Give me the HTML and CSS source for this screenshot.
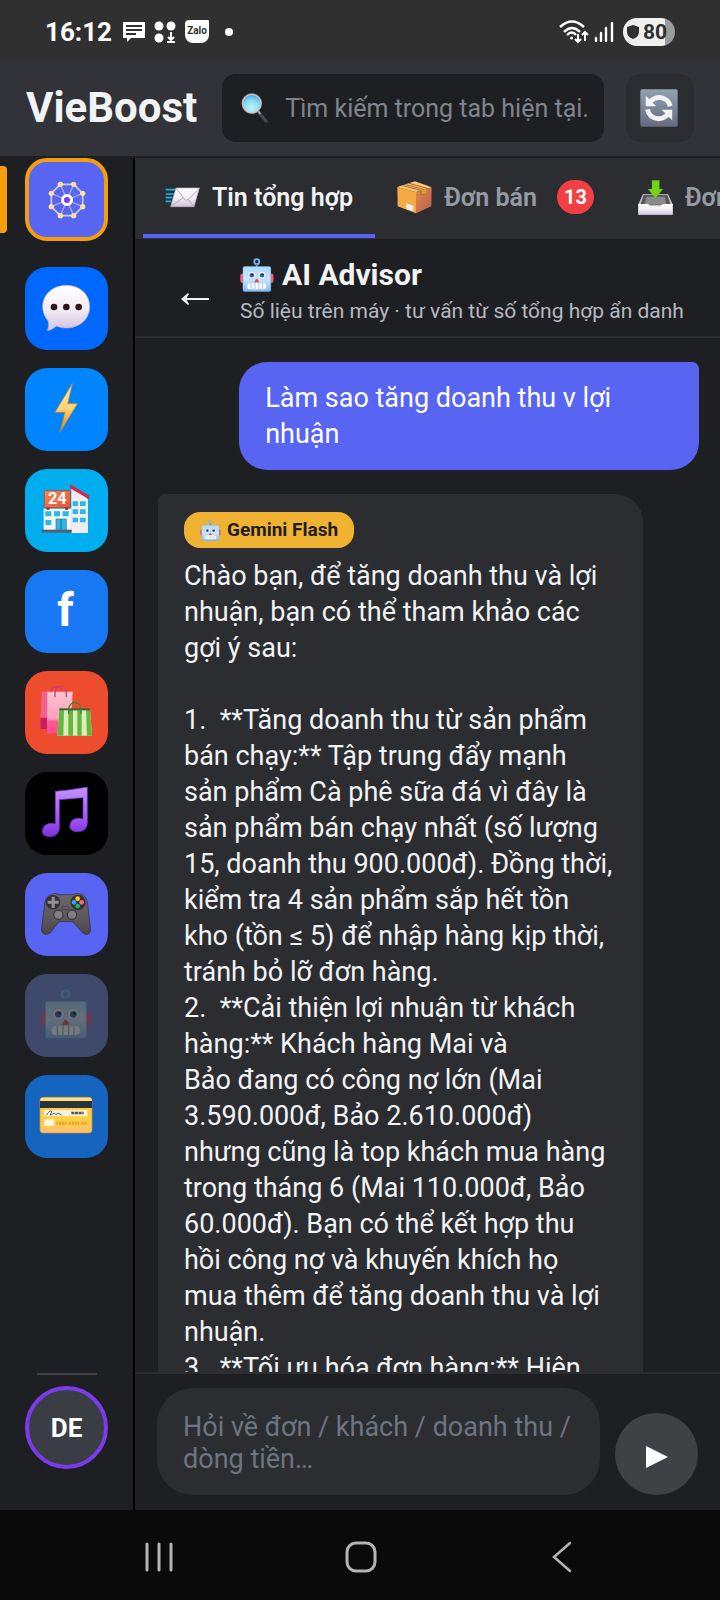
FILE: index.html
```html
<!DOCTYPE html>
<html lang="vi">
<head>
  <meta charset="UTF-8">
  <meta name="viewport" content="width=device-width, initial-scale=1.0">
  <title>VieBoost</title>
  <link rel="stylesheet" href="styles.css">
</head>
<body>
  <svg class="sprite" aria-hidden="true">
    <defs>
      <linearGradient id="g-robot" x1="0" y1="0" x2="0" y2="1"><stop offset="0" stop-color="#a9dcff"/><stop offset=".5" stop-color="#c9e6ff"/><stop offset="1" stop-color="#7fbcf5"/></linearGradient>
      <linearGradient id="g-white" x1="0" y1="0" x2="0" y2="1"><stop offset="0" stop-color="#ffffff"/><stop offset=".55" stop-color="#f0ecf2"/><stop offset="1" stop-color="#d3c0e2"/></linearGradient>
      <linearGradient id="g-bolt" x1="0" y1="0" x2="0" y2="1"><stop offset="0" stop-color="#ffe9a0"/><stop offset=".5" stop-color="#ffd673"/><stop offset="1" stop-color="#e07e18"/></linearGradient>
      <linearGradient id="g-sign" x1="0" y1="0" x2="1" y2="1"><stop offset="0" stop-color="#f08a50"/><stop offset="1" stop-color="#ea5238"/></linearGradient>
      <linearGradient id="g-pink" x1="0" y1="0" x2="0" y2="1"><stop offset="0" stop-color="#ffc4d2"/><stop offset=".65" stop-color="#ff9fb9"/><stop offset=".7" stop-color="#ff5c94"/><stop offset="1" stop-color="#ff4a8c"/></linearGradient>
      <linearGradient id="g-note" x1="0" y1="0" x2="0" y2="1"><stop offset="0" stop-color="#c592ff"/><stop offset=".6" stop-color="#a55bf5"/><stop offset="1" stop-color="#7a2fe0"/></linearGradient>
      <linearGradient id="g-pad" x1="0" y1="0" x2="0" y2="1"><stop offset="0" stop-color="#6c686c"/><stop offset=".6" stop-color="#5c585c"/><stop offset="1" stop-color="#484448"/></linearGradient>
      <linearGradient id="g-card" x1="0" y1="0" x2="0" y2="1"><stop offset="0" stop-color="#ffcc3a"/><stop offset=".6" stop-color="#ffd040"/><stop offset="1" stop-color="#ffbf70"/></linearGradient>
      <linearGradient id="g-sync" x1="0" y1="0" x2="0" y2="1"><stop offset="0" stop-color="#8fa3b2"/><stop offset="1" stop-color="#686a80"/></linearGradient>
      <linearGradient id="g-box" x1="0" y1="0" x2="1" y2="1"><stop offset="0" stop-color="#dd8c4a"/><stop offset="1" stop-color="#bd5c50"/></linearGradient>
      <radialGradient id="g-lens" cx=".5" cy=".75" r=".7"><stop offset="0" stop-color="#c5f3fb"/><stop offset=".6" stop-color="#8adcf8"/><stop offset="1" stop-color="#3fb0ea"/></radialGradient>
    </defs>
    <symbol id="robot" viewBox="0 0 150 150">
      <circle cx="74" cy="16" r="11" fill="none" stroke="#78b5ee" stroke-width="8"/>
      <path d="M74 27v12" stroke="#5c94d0" stroke-width="9"/>
      <rect x="1" y="68" width="20" height="42" rx="10" fill="#f25a78"/>
      <rect x="128" y="68" width="20" height="42" rx="10" fill="#f25a78"/>
      <rect x="13" y="37" width="123" height="111" rx="8" fill="url(#g-robot)" stroke="#68aef0" stroke-width="2"/>
      <circle cx="52" cy="76" r="18" fill="#f5f3f8" stroke="#9eb6d4" stroke-width="2"/>
      <circle cx="97" cy="76" r="18" fill="#f5f3f8" stroke="#9eb6d4" stroke-width="2"/>
      <circle cx="52" cy="76" r="10" fill="#2b66b4"/><circle cx="97" cy="76" r="10" fill="#2b66b4"/>
      <circle cx="55" cy="73" r="4" fill="#112544"/><circle cx="100" cy="73" r="4" fill="#112544"/>
      <path d="M74 89l12 18H62z" fill="#f0445c"/>
      <rect x="32" y="111" width="84" height="27" rx="12" fill="#fff"/>
      <path d="M49 111v27M66 111v27M83 111v27M99 111v27" stroke="#9db8d8" stroke-width="4"/>
    </symbol>
  </svg>

  <div class="statusbar">
    <span class="time">16:12</span>
    <svg class="st-msg" viewBox="0 0 24 22"><path d="M1 1h22v16H9l-4 4v-4H1z" fill="#fff"/><path d="M4 5h16M4 9h16M4 13h10" stroke="#303030" stroke-width="2"/></svg>
    <svg class="st-dots" viewBox="0 0 22 22"><g fill="#fff"><circle cx="5" cy="5" r="4.500"/><circle cx="17" cy="5" r="4.500"/><circle cx="5" cy="17" r="4.500"/></g><path d="M17 11v8m-3-3l3 3 3-3M13 21h8" fill="none" stroke="#fff" stroke-width="2"/></svg>
    <span class="st-zalo">Zalo</span>
    <span class="st-dot"></span>
    <span class="spacer"></span>
    <svg class="st-wifi" viewBox="0 0 30 24"><g fill="none" stroke="#fff" stroke-width="2.400"><path d="M1 7q12-11 24 0M5 12q8-8 16 0M8 15q5-5 9 0"/><path stroke-width="2" d="M19 14v8m-3-3l3 3 3-3M26 21v-9m-3 3l3-3 3 3"/></g><circle cx="12.500" cy="18" r="1.500" fill="#fff"/></svg>
    <svg class="st-signal" viewBox="0 0 20 20"><path d="M2 16v3M7 11v8M12 6v13M18 1v18" stroke="#fff" stroke-width="2.400" stroke-linecap="round"/></svg>
    <span class="battery"><svg viewBox="0 0 14 16"><path d="M7 1l6 2v5q0 5-6 7Q1 13 1 8V3z" fill="#303030"/></svg>80</span>
  </div>

  <header class="topbar">
    <h1>VieBoost</h1>
    <label class="search">
      <svg viewBox="0 0 80 88"><path d="M53 58l22 25" stroke="#4d4558" stroke-width="9" stroke-linecap="round"/><path d="M50 52l8 9" stroke="#b9b6bd" stroke-width="5"/><circle cx="32" cy="31" r="28" fill="url(#g-lens)" stroke="#9a939c" stroke-width="5"/><circle cx="32" cy="31" r="27" fill="none" stroke="#f0eef2" stroke-width="2"/></svg>
      <input type="text" placeholder="Tìm kiếm trong tab hiện tại." aria-label="Tìm kiếm">
    </label>
    <button class="refresh" aria-label="Làm mới">
      <svg viewBox="0 0 112 112"><rect x="1" y="1" width="110" height="110" rx="5" fill="url(#g-sync)"/><path d="M2 53h108" stroke="#77889a" stroke-width="3"/><g fill="none" stroke="#f3f3f5" stroke-width="14"><path d="M29 37Q56 14 80 34q7 7 9 17"/><path d="M83 75Q56 98 32 79q-8-8-10-19"/></g><path d="M17 20v31h31zM95 92V61H64z" fill="#f3f3f5"/></svg>
    </button>
  </header>

  <div class="app">
    <nav class="rail">
      <a href="#" class="item active" aria-label="Tổng hợp">
        <svg class="wheel" viewBox="0 0 120 120"><path d="M60 60L40 13M60 60l20-47M60 60l47-20M60 60l47 20M60 60l20 47M60 60l-20 47M60 60L13 80M60 60L13 40" stroke="#a5aafa" stroke-width="4"/><path d="M40 13h40l27 27v40l-27 27H40L13 80V40z" fill="none" stroke="#cdd0fc" stroke-width="5"/><g fill="#fde389"><circle cx="40" cy="13" r="8"/><circle cx="80" cy="13" r="8"/><circle cx="107" cy="40" r="8"/><circle cx="107" cy="80" r="8"/><circle cx="80" cy="107" r="8"/><circle cx="40" cy="107" r="8"/><circle cx="13" cy="80" r="8"/><circle cx="13" cy="40" r="8"/></g><circle cx="60" cy="60" r="18" fill="#fff"/><circle cx="60" cy="60" r="9" fill="#7c3aed"/></svg>
      </a>
      <a href="#" class="item zalo" aria-label="Zalo">
        <svg viewBox="0 0 150 150"><path d="M76 10c40 0 70 27 70 64s-30 64-70 64c-12 0-22-3-30-6-8 8-18 13-28 14 6-10 6-20 3-30C11 105 5 90 5 74 5 37 36 10 76 10z" fill="url(#g-white)" stroke="#b8b0c4" stroke-width="2"/><g fill="#2a1722"><circle cx="39" cy="75" r="10"/><circle cx="76" cy="75" r="10"/><circle cx="113" cy="75" r="10"/></g></svg>
      </a>
      <a href="#" class="item messenger" aria-label="Messenger">
        <svg viewBox="0 0 150 150"><path d="M94 2L42 88h30L57 148l52-86H80z" fill="url(#g-bolt)" stroke="#c98a2c" stroke-width="2"/></svg>
      </a>
      <a href="#" class="item store" aria-label="Cửa hàng">
        <svg viewBox="0 0 150 150"><path d="M91 8l50 38v101H91z" fill="#efedf2"/><path d="M87 1l58 34v11L87 13z" fill="#de2347"/><rect x="8" y="74" width="84" height="66" fill="#f6f4f7"/><rect x="10" y="20" width="78" height="51" rx="3" fill="url(#g-sign)" stroke="#b33830" stroke-width="2"/><path d="M16 71h10v6H16zM72 71h10v6H72z" fill="#91343a"/><text x="49" y="61" text-anchor="middle" class="shop-no">24</text><g fill="#2cb8e4"><path d="M13 82h18v15H13zM39 82h18v15H39zM65 82h18v15H65zM13 108h18v15H13zM95 52h16v14H95zM117 52h17v14h-17zM95 76h16v14H95zM117 76h17v14h-17zM95 101h16v14H95zM117 101h17v14h-17z"/><path d="M45 105h31v36H45z" stroke="#367898" stroke-width="2"/></g><path d="M60 105v35" stroke="#246a84" stroke-width="3"/><path d="M2 137h90v9H2z" fill="#55606c"/></svg>
      </a>
      <a href="#" class="item facebook">f</a>
      <a href="#" class="item shopee" aria-label="Shopee">
        <svg class="wide" viewBox="0 0 160 156"><path d="M7 20h57v116L2 130z" fill="#f1628e"/><path d="M3 98h20v34H3z" fill="#c91e62"/><path d="M24 20h76l-6 121-71 5z" fill="url(#g-pink)"/><path d="M47 37V25c0-29 34-29 34 0v11M34 22c0-17 22-23 33-9" fill="none" stroke="#d93676" stroke-width="4"/><path d="M60 73h92l6 79H54z" fill="#d8f0b8"/><path d="M60 73h14l-2 79H54zM87 73h14v79H87zM114 73h13v79h-13zM140 73h12l6 79h-15z" fill="#66b442"/><path d="M60 70h92v6H60z" fill="#3b652d"/><path d="M88 88V75c0-30 37-30 37 0v13" fill="none" stroke="#47852f" stroke-width="4"/></svg>
      </a>
      <a href="#" class="item tiktok" aria-label="TikTok">
        <svg viewBox="0 0 150 150"><path d="M43 13Q90 9 139 0v112q-4 22-28 22-25 0-25-18 3-22 29-22l11 2V32L55 38v87q-3 22-27 24-25 0-24-18 2-21 29-22l10 2z" fill="url(#g-note)" stroke="#7430cc" stroke-width="2"/></svg>
      </a>
      <a href="#" class="item discord" aria-label="Trò chơi">
        <svg viewBox="0 0 150 150"><path d="M35 18q8-5 18 2h44q11-7 21-2 20 5 22 31l9 78q-6 20-24 8L95 101H54l-27 34q-20 12-26-9l10-79q3-24 24-29z" fill="url(#g-pad)" stroke="#302e34" stroke-width="2"/><circle cx="36" cy="43" r="22" fill="#343236"/><circle cx="111" cy="43" r="23" fill="#343236"/><path d="M32 26h9v12h12v9H41v13h-9V47H20v-9h12z" fill="#929094"/><circle cx="110" cy="32" r="7" fill="#ffc921"/><circle cx="99" cy="43" r="7" fill="#24a9ef"/><circle cx="122" cy="43" r="7" fill="#ff6287"/><circle cx="110" cy="54" r="7" fill="#13b77c"/><rect x="63" y="55" width="21" height="10" rx="5" fill="#605c60" stroke="#3c393d" stroke-width="2"/><circle cx="52" cy="80" r="14" fill="#827e82" stroke="#3c393d" stroke-width="4"/><circle cx="93" cy="80" r="14" fill="#827e82" stroke="#3c393d" stroke-width="4"/></svg>
      </a>
      <a href="#" class="item bot" aria-label="Bot"><svg><use href="#robot"/></svg></a>
      <a href="#" class="item bank" aria-label="Thanh toán">
        <svg class="wide" viewBox="0 0 160 156"><rect x="2" y="25" width="156" height="107" rx="9" fill="url(#g-card)" stroke="#d78a26" stroke-width="2"/><path d="M10 26h140q7 0 7 9H3q0-9 7-9z" fill="#ffe08a"/><path d="M2 36h156v21H2z" fill="#26333a"/><path d="M14 63h130v19H14z" fill="#f7efe2"/><path d="M21 79q14-21 16-10-9 15 2 7 6-8 10 0 9-7 18 2" fill="none" stroke="#625b50" stroke-width="3"/><path d="M96 72h37" stroke="#5b5147" stroke-width="7" stroke-dasharray="9 2"/><rect x="15" y="91" width="30" height="20" rx="4" fill="#fff5df"/><path d="M51 103h92" stroke="#e8a824" stroke-width="9" stroke-dasharray="6 2 7 2 6 2 6 7"/></svg>
      </a>
      <div class="rail-foot">
        <hr>
        <button class="avatar">DE</button>
      </div>
    </nav>

    <main class="content">
      <div class="tabs">
        <button class="tab active">
          <svg viewBox="0 0 105 105"><path d="M2 29h30M2 42h25M2 53h20M2 64h16" stroke="#15b5f5" stroke-width="5"/><path d="M33 24h70L87 80H17z" fill="url(#g-white)" stroke="#bfb8bf" stroke-width="2"/><path d="M34 25l25 34q5 3 10 0l33-33M18 79l37-26M86 79L70 58" fill="none" stroke="#b3abb3" stroke-width="3"/></svg>
          Tin tổng hợp
        </button>
        <button class="tab">
          <svg viewBox="0 0 105 105"><path d="M1 21L54 4l50 18-47 14z" fill="#ffc978"/><path d="M1 21l56 15v64L2 79z" fill="#f5aa43"/><path d="M57 36l47-14-1 57-46 21z" fill="url(#g-box)"/><path d="M28 14l54 15v13l-10 3V32L19 17M36 10l54 15" fill="none" stroke="#a5602a" stroke-width="3"/><path d="M74 31l14-4v12l-14 5z" fill="#e39a3c"/><path d="M28 70l21 7v17l-21-7z" fill="#ededf2"/></svg>
          Đơn bán <span class="badge">13</span>
        </button>
        <button class="tab">
          <svg viewBox="0 0 105 105"><path d="M15 42h75l14 31v31H1V73z" fill="#c8c4cc"/><path d="M17 44h71l10 30H7z" fill="#55555b"/><path d="M25 50h55l5 23H20z" fill="#8b8990"/><path d="M1 72h30l6 7h31l6-7h30v32H1z" fill="url(#g-white)"/><path d="M42 1h22v26h11L52 55 30 27h12z" fill="#73d319" stroke="#4ba90b" stroke-width="1"/></svg>
          Đơn nhập
        </button>
      </div>

      <div class="chat-head">
        <button class="back" aria-label="Quay lại"><svg viewBox="0 0 30 14"><path d="M29 7H3" stroke="#f2f3f5" stroke-width="2"/><path d="M1 7l7-6 1 1-3 5 3 5-1 1z" fill="#f2f3f5"/></svg></button>
        <div>
          <h2><svg><use href="#robot"/></svg>AI Advisor</h2>
          <p>Số liệu trên máy · tư vấn từ số tổng hợp ẩn danh</p>
        </div>
      </div>

      <div class="messages">
        <div class="msg user">Làm sao tăng doanh thu v lợi nhuận</div>
        <div class="msg ai">
          <span class="model"><svg><use href="#robot"/></svg>Gemini Flash</span>
          <div class="text">Chào bạn, để tăng doanh thu và lợi nhuận, bạn có thể tham khảo các gợi ý sau:

1.  **Tăng doanh thu từ sản phẩm bán chạy:** Tập trung đẩy mạnh sản&nbsp;phẩm Cà phê sữa đá vì đây là sản&nbsp;phẩm bán chạy nhất (số lượng 15, doanh thu 900.000đ). Đồng thời, kiểm tra 4 sản phẩm sắp hết tồn kho (tồn ≤ 5) để nhập hàng kịp thời, tránh bỏ lỡ đơn hàng.
2.  **Cải thiện lợi nhuận từ khách hàng:** Khách hàng Mai và Bảo&nbsp;đang có công nợ lớn (Mai 3.590.000đ, Bảo 2.610.000đ) nhưng&nbsp;cũng là top khách mua hàng trong tháng 6 (Mai 110.000đ, Bảo 60.000đ). Bạn có thể kết hợp thu hồi&nbsp;công nợ và khuyến khích họ mua thêm để tăng doanh thu và lợi nhuận.
3.  **Tối ưu hóa đơn hàng:** Hiện</div>
        </div>
      </div>

      <form class="composer">
        <textarea rows="2" placeholder="Hỏi về đơn / khách / doanh thu / dòng tiền…" aria-label="Câu hỏi"></textarea>
        <button type="button" class="send" aria-label="Gửi"><svg viewBox="0 0 22 22"><path d="M0 0l22 11L0 22z" fill="#fff"/></svg></button>
      </form>
    </main>
  </div>

  <div class="navbar">
    <button aria-label="Gần đây"><svg viewBox="0 0 32 32"><path d="M4 3v26M16 3v26M28 3v26" stroke="#b4b4b4" stroke-width="3" stroke-linecap="round"/></svg></button>
    <button aria-label="Trang chủ"><svg viewBox="0 0 32 32"><rect x="2" y="2" width="28" height="28" rx="9" fill="none" stroke="#b4b4b4" stroke-width="3"/></svg></button>
    <button aria-label="Trở về"><svg viewBox="0 0 32 32"><path d="M24 2L8 16l16 14" fill="none" stroke="#b4b4b4" stroke-width="2.500" stroke-linecap="round"/></svg></button>
  </div>
</body>
</html>
```
FILE: styles.css
```css
* { box-sizing: border-box; }
body {
  margin: 0;
  height: 100vh;
  display: flex;
  flex-direction: column;
  overflow: hidden;
  background: #1e1f22;
  color: #f2f3f5;
  font-family: Roboto, "Noto Sans", sans-serif;
  font-size: 26px;
}
button, input, textarea {
  font: inherit;
  color: inherit;
  border: none;
  background: none;
  padding: 0;
  margin: 0;
}
button { cursor: pointer; }
svg { display: block; flex-shrink: 0; }
h1, h2, p { margin: 0; }
.sprite { position: absolute; width: 0; height: 0; }
.spacer { flex: 1; }

/* status bar */
.statusbar {
  display: flex;
  align-items: center;
  flex-shrink: 0;
  height: 59px;
  padding: 4px 45px 0;
  background: #303030;
  color: #fff;
}
.time { font-weight: 700; font-size: 26px; margin-right: 10px; }
.st-msg { width: 24px; height: 22px; margin-right: 8px; }
.st-dots { width: 22px; height: 22px; margin-right: 9px; }
.st-zalo {
  width: 24px;
  height: 23px;
  border-radius: 4px 1px 8px 8px;
  background: #fff;
  color: #303030;
  font-size: 10px;
  font-weight: 700;
  line-height: 22px;
  text-align: center;
}
.st-dot { width: 8px; height: 8px; margin-left: 16px; border-radius: 50%; background: #fff; }
.st-wifi { width: 30px; height: 24px; margin-right: 5px; }
.st-signal { width: 20px; height: 20px; margin-right: 9px; }
.battery {
  display: flex;
  align-items: center;
  gap: 3px;
  width: 52px;
  height: 28px;
  padding-left: 3px;
  border-radius: 14px;
  background: linear-gradient(to right, #eee 80%, #9b9b9b 80%);
  color: #303030;
  font-size: 21px;
  font-weight: 700;
}
.battery svg { width: 14px; height: 16px; }

/* header */
.topbar {
  display: flex;
  align-items: center;
  flex-shrink: 0;
  height: 99px;
  padding: 0 26px;
  background: #313338;
  border-bottom: 2px solid #1e1f22;
}
h1 { font-size: 42px; line-height: 48px; font-weight: 700; }
.search {
  display: flex;
  align-items: center;
  flex: 1;
  gap: 17px;
  min-width: 0;
  height: 68px;
  margin: 0 22px 0 25px;
  padding: 0 14px 0 19px;
  border-radius: 14px;
  background: #1e1f22;
}
.search svg { width: 27px; height: 30px; }
.search input { flex: 1; min-width: 0; padding-top: 2px; outline: none; font-size: 25px; }
.search input::placeholder { color: #80848e; opacity: 1; }
.refresh {
  display: flex;
  align-items: center;
  justify-content: center;
  width: 68px;
  height: 68px;
  padding-right: 2px;
  border-radius: 14px;
  background: #2b2d31;
}
.refresh svg { width: 38px; height: 38px; }

/* layout */
.app { display: flex; flex: 1; min-height: 0; }
.rail {
  display: flex;
  flex-direction: column;
  align-items: center;
  gap: 18px;
  width: 135px;
  flex-shrink: 0;
  border-right: 2px solid #000;
}
.item {
  display: flex;
  align-items: center;
  justify-content: center;
  width: 83px;
  height: 83px;
  padding: 0 2px 3px 0;
  flex-shrink: 0;
  border-radius: 22px;
  color: #fff;
  font-size: 46px;
  font-weight: 700;
  line-height: 1;
  text-decoration: none;
}
.item svg { width: 50px; height: 50px; }
.item .wide { width: 54px; height: 52px; }
.item .wheel { width: 40px; height: 40px; }
.item.active {
  position: relative;
  margin-bottom: 8px;
  padding: 0;
  border: 4px solid #f59e0b;
  background: #5865f2;
}
.item.active::before {
  content: "";
  position: absolute;
  left: -29px;
  top: 4px;
  width: 7px;
  height: 67px;
  border-radius: 0 4px 4px 0;
  background: #f59e0b;
}
.zalo { background: #0068ff; }
.messenger { background: #0084ff; }
.store { background: #00aeef; }
.facebook { background: #1877f2; }
.shopee { background: #ee4d2d; }
.tiktok { background: #000; }
.discord { background: #5865f2; }
.bot { background: #7289da; opacity: .4; }
.bank { background: #1565c0; }
.shop-no { font: 700 49px Roboto, sans-serif; fill: #fff; }
.rail-foot { margin-top: auto; padding-bottom: 41px; }
.rail-foot hr { width: 60px; height: 2px; margin: 0 auto 11px; border: none; background: #3f4147; }
.avatar {
  width: 83px;
  height: 83px;
  border: 4px solid #7c3aed;
  border-radius: 50%;
  background: #3b3d44;
  color: #fff;
  font-weight: 700;
}

.content { display: flex; flex: 1; flex-direction: column; min-width: 0; }
.tabs {
  display: flex;
  flex-shrink: 0;
  height: 81px;
  padding: 0 8px 1px;
  overflow: hidden;
  background: #2b2d31;
}
.tab {
  display: flex;
  align-items: center;
  flex-shrink: 0;
  gap: 12px;
  padding: 2px 22px 0;
  border-bottom: 4px solid transparent;
  color: #949ba4;
  font-size: 25px;
  font-weight: 600;
  white-space: nowrap;
}
.tab.active { border-color: #5865f2; color: #f2f3f5; }
.tab svg { width: 35px; height: 35px; }
.badge {
  min-width: 37px;
  margin-left: 8px;
  border-radius: 17px;
  background: #f23f43;
  color: #fff;
  font-size: 20px;
  font-weight: 700;
  line-height: 34px;
  text-align: center;
}

/* chat */
.chat-head {
  display: flex;
  flex-shrink: 0;
  height: 99px;
  padding: 18px 22px 0 45px;
  gap: 30px;
  border-bottom: 2px solid #2b2d31;
}
.back { height: 84px; }
.back svg { width: 30px; height: 14px; }
h2 { display: flex; align-items: center; gap: 8px; font-size: 30px; line-height: 36px; font-weight: 700; }
h2 svg { width: 34px; height: 34px; }
.chat-head p { color: #b5bac1; font-size: 21px; line-height: 36px; white-space: nowrap; }
.messages {
  display: flex;
  flex: 1;
  flex-direction: column;
  align-items: flex-start;
  gap: 24px;
  min-height: 0;
  overflow: hidden;
  padding: 24px 21px 0 23px;
}
.msg {
  flex-shrink: 0;
  padding: 18px 26px;
  border-radius: 28px;
  font-size: 27px;
  line-height: 36px;
}
.user {
  align-self: flex-end;
  max-width: 85%;
  border-top-right-radius: 7px;
  background: #5865f2;
  color: #fff;
}
.ai {
  max-width: calc(100% - 56px);
  border-top-left-radius: 7px;
  background: #2b2d31;
}
.text { white-space: pre-wrap; }
.model {
  display: flex;
  align-items: center;
  gap: 6px;
  width: fit-content;
  height: 36px;
  margin-bottom: 10px;
  padding: 0 16px;
  border-radius: 16px;
  background: #f0b232;
  color: #1e1f22;
  font-size: 19px;
  font-weight: 700;
}
.model svg { width: 21px; height: 21px; }

.composer {
  display: flex;
  align-items: flex-end;
  flex-shrink: 0;
  gap: 15px;
  padding: 14px 22px 15px;
  border-top: 2px solid #2b2d31;
}
.composer textarea {
  flex: 1;
  min-width: 0;
  height: 107px;
  padding: 23px 26px;
  border-radius: 36px;
  outline: none;
  resize: none;
  overflow: hidden;
  background: #2b2d31;
  font-size: 27px;
  line-height: 32px;
}
.composer textarea::placeholder { color: #6d7482; opacity: 1; }
.send {
  display: flex;
  align-items: center;
  justify-content: center;
  width: 83px;
  height: 82px;
  padding-top: 5px;
  border-radius: 50%;
  background: #404145;
}
.send svg { width: 22px; height: 22px; }

/* system navigation */
.navbar {
  display: flex;
  justify-content: space-between;
  align-items: center;
  flex-shrink: 0;
  height: 90px;
  padding: 3px 142px 0 143px;
  background: #0a0a0a;
}
.navbar svg { width: 32px; height: 32px; }
```
